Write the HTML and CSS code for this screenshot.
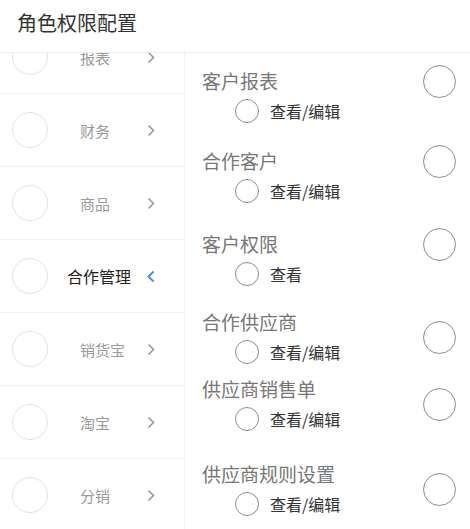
FILE: index.html
```html
<!DOCTYPE html>
<html>
  <head>
    <meta name="viewport" content="width=device-width, initial-scale=1.0"/>
    <link rel="stylesheet" href="styles.css">
  </head>
  <body>
    <div class="header">角色权限配置</div>
    <div class="main">
      <div class="menu">
        <div class="menu-list">
          <div class="menu-row">
            <div class="dot"></div>
            <div class="menu-label">报表</div>
            <svg class="chev" viewBox="0 0 8 13"><path d="M1.5 1.5 L6.5 6.5 L1.5 11.5"/></svg>
          </div>
          <div class="menu-row">
            <div class="dot"></div>
            <div class="menu-label">财务</div>
            <svg class="chev" viewBox="0 0 8 13"><path d="M1.5 1.5 L6.5 6.5 L1.5 11.5"/></svg>
          </div>
          <div class="menu-row">
            <div class="dot"></div>
            <div class="menu-label">商品</div>
            <svg class="chev" viewBox="0 0 8 13"><path d="M1.5 1.5 L6.5 6.5 L1.5 11.5"/></svg>
          </div>
          <div class="menu-row active">
            <div class="dot"></div>
            <div class="menu-label">合作管理</div>
            <svg class="chev" viewBox="0 0 8 13"><path d="M6.5 1.5 L1.5 6.5 L6.5 11.5"/></svg>
          </div>
          <div class="menu-row">
            <div class="dot"></div>
            <div class="menu-label">销货宝</div>
            <svg class="chev" viewBox="0 0 8 13"><path d="M1.5 1.5 L6.5 6.5 L1.5 11.5"/></svg>
          </div>
          <div class="menu-row">
            <div class="dot"></div>
            <div class="menu-label">淘宝</div>
            <svg class="chev" viewBox="0 0 8 13"><path d="M1.5 1.5 L6.5 6.5 L1.5 11.5"/></svg>
          </div>
          <div class="menu-row">
            <div class="dot"></div>
            <div class="menu-label">分销</div>
            <svg class="chev" viewBox="0 0 8 13"><path d="M1.5 1.5 L6.5 6.5 L1.5 11.5"/></svg>
          </div>
        </div>
      </div>

      <div class="perms">
        <div class="perm">
          <div class="perm-title">客户报表</div>
          <div class="check"></div>
          <div class="perm-sub"><span class="radio"></span>查看/编辑</div>
        </div>
        <div class="perm">
          <div class="perm-title">合作客户</div>
          <div class="check"></div>
          <div class="perm-sub"><span class="radio"></span>查看/编辑</div>
        </div>
        <div class="perm">
          <div class="perm-title">客户权限</div>
          <div class="check"></div>
          <div class="perm-sub"><span class="radio"></span>查看</div>
        </div>
        <div class="perm mid">
          <div class="perm-title">合作供应商</div>
          <div class="check"></div>
          <div class="perm-sub"><span class="radio"></span>查看/编辑</div>
        </div>
        <div class="perm mid">
          <div class="perm-title">供应商销售单</div>
          <div class="check"></div>
          <div class="perm-sub"><span class="radio"></span>查看/编辑</div>
        </div>
        <div class="perm mid">
          <div class="perm-title">供应商规则设置</div>
          <div class="check"></div>
          <div class="perm-sub"><span class="radio"></span>查看/编辑</div>
        </div>
      </div>
    </div>
  </body>
</html>
```

FILE: styles.css
```css
html, body {
    margin: 0;
    height: 100%;
}
body {
    display: flex;
    flex-direction: column;
    overflow: hidden;
    background: #fff;
    font-family: "Noto Sans CJK SC", "Noto Sans", sans-serif;
    color: #333;
}

.header {
    position: relative;
    z-index: 2;
    height: 53px;
    box-sizing: border-box;
    padding: 10px 17px 0;
    font-size: 20px;
    line-height: 26px;
    color: #333;
    background: #fff;
    border-bottom: 1px solid #eee;
}

.main {
    flex: 1;
    display: flex;
    min-height: 0;
}

/* left menu, scrolled a little */
.menu {
    width: 184px;
    border-right: 1px solid #efefef;
    overflow: hidden;
}
.menu-list { margin-top: -32px; }
.menu-row {
    height: 72px;
    display: flex;
    align-items: center;
    padding-left: 12px;
    border-bottom: 1px solid #f0f0f0;
}
.dot {
    width: 34px;
    height: 34px;
    border: 1px solid #e2e2e2;
    border-radius: 50%;
    flex: none;
}
.menu-label {
    width: 67px;
    margin-left: 32px;
    font-size: 15px;
    color: #9a9a9a;
}
.chev {
    width: 8px;
    height: 13px;
    fill: none;
    stroke: #999;
    stroke-width: 1.6;
}
.active .menu-label {
    width: 80px;
    margin-left: 19px;
    font-size: 16px;
    color: #222;
}
.active .chev { stroke: #4a90e2; stroke-width: 2; }

/* right permission list */
.perms {
    flex: 1;
    padding: 16px 14px 0 17px;
}
.perm {
    display: grid;
    grid-template-columns: 1fr auto;
    margin-top: 26px;
}
.perm:nth-child(1) { margin-top: 0; }
.perm:nth-child(3) { margin-top: 29px; }
.perm:nth-child(4) { margin-top: 24px; }
.perm:nth-child(5) { margin-top: 13px; }
.perm:nth-child(6) { margin-top: 31px; }

.perm-title {
    font-size: 19px;
    line-height: 24px;
    color: #777;
}
.check {
    grid-column: 2;
    grid-row: 1;
    align-self: center;
    width: 31px;
    height: 31px;
    margin: -5px 0;
    border: 1.5px solid #8c8c8c;
    border-radius: 50%;
}
.mid .check { grid-row: 1 / 3; margin: 0; }
.perm-sub {
    grid-column: 1;
    grid-row: 2;
    display: flex;
    align-items: center;
    margin-top: 6px;
    padding-left: 33px;
    font-size: 16px;
    line-height: 24px;
    color: #333;
}
.radio {
    width: 22px;
    height: 22px;
    border: 1.5px solid #8c8c8c;
    border-radius: 50%;
    margin-right: 11px;
}
```
